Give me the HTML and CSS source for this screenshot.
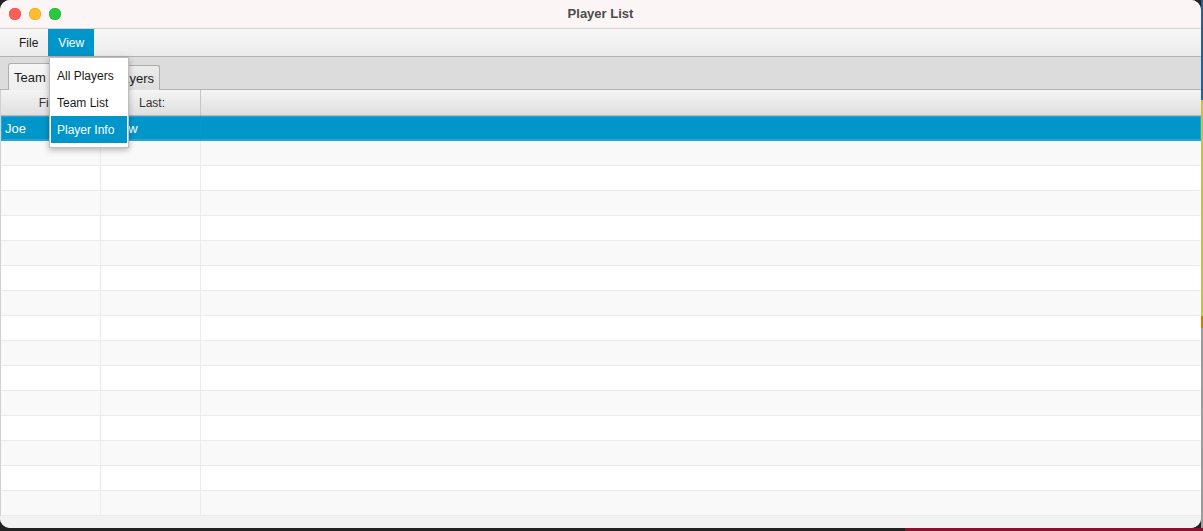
FILE: index.html
```html
<!DOCTYPE html>
<html>
<head>
<meta charset="utf-8">
<title>Player List</title>
<link rel="stylesheet" href="styles.css">
</head>
<body>
<div class="window">
  <div class="titlebar">
    <div class="lights">
      <span class="light red"></span>
      <span class="light yellow"></span>
      <span class="light green"></span>
    </div>
    <div class="title">Player List</div>
  </div>
  <div class="menubar">
    <div class="menu-item">File</div>
    <div class="menu-item active">View</div>
  </div>
  <div class="tabbar">
    <div class="tab tab-first selected">Team List</div>
    <div class="tab">All Players</div>
  </div>
  <div class="table">
    <div class="thead">
      <div class="th c1">First:</div>
      <div class="th c2">Last:</div>
      <div class="th c3"></div>
    </div>
    <div class="tbody">
      <div class="tr selected"><div class="td c1">Joe</div><div class="td c2">Snow</div><div class="td c3"></div></div>
      <div class="tr odd"><div class="td c1"></div><div class="td c2"></div><div class="td c3"></div></div>
      <div class="tr"><div class="td c1"></div><div class="td c2"></div><div class="td c3"></div></div>
      <div class="tr odd"><div class="td c1"></div><div class="td c2"></div><div class="td c3"></div></div>
      <div class="tr"><div class="td c1"></div><div class="td c2"></div><div class="td c3"></div></div>
      <div class="tr odd"><div class="td c1"></div><div class="td c2"></div><div class="td c3"></div></div>
      <div class="tr"><div class="td c1"></div><div class="td c2"></div><div class="td c3"></div></div>
      <div class="tr odd"><div class="td c1"></div><div class="td c2"></div><div class="td c3"></div></div>
      <div class="tr"><div class="td c1"></div><div class="td c2"></div><div class="td c3"></div></div>
      <div class="tr odd"><div class="td c1"></div><div class="td c2"></div><div class="td c3"></div></div>
      <div class="tr"><div class="td c1"></div><div class="td c2"></div><div class="td c3"></div></div>
      <div class="tr odd"><div class="td c1"></div><div class="td c2"></div><div class="td c3"></div></div>
      <div class="tr"><div class="td c1"></div><div class="td c2"></div><div class="td c3"></div></div>
      <div class="tr odd"><div class="td c1"></div><div class="td c2"></div><div class="td c3"></div></div>
      <div class="tr"><div class="td c1"></div><div class="td c2"></div><div class="td c3"></div></div>
      <div class="tr odd"><div class="td c1"></div><div class="td c2"></div><div class="td c3"></div></div>
    </div>
  </div>
  <div class="filler"></div>

  <div class="dropdown">
    <div class="dd-item">All Players</div>
    <div class="dd-item">Team List</div>
    <div class="dd-item hover">Player Info</div>
  </div>
</div>
</body>
</html>
```

FILE: styles.css
```css
* { box-sizing: border-box; }

html, body { margin: 0; padding: 0; }

body {
  width: 1203px;
  height: 531px;
  overflow: hidden;
  font-family: "Liberation Sans", Arial, sans-serif;
  background:
    linear-gradient(#8a1030, #8a1030) right bottom / 298px 3px no-repeat,
    linear-gradient(to bottom, #2a5d9a 0, #2a5d9a 100px, #c9c04a 100px, #c9c04a 316px, #c98200 316px, #c98200 328px, #9c9c9c 328px) right top / 2px 100% no-repeat,
    #222222;
}

.window {
  position: relative;
  width: 1201px;
  height: 528px;
  border-radius: 10px;
  overflow: hidden;
  background: #f2f2f2;
  display: flex;
  flex-direction: column;
}

/* Title bar */
.titlebar {
  position: relative;
  height: 29px;
  flex: none;
  background: #fbf5f5;
  border-bottom: 1px solid #d6d2d2;
  display: flex;
  align-items: center;
  justify-content: center;
}

.lights {
  position: absolute;
  left: 9px;
  top: 8px;
  display: flex;
  gap: 8px;
}

.light {
  width: 12px;
  height: 12px;
  border-radius: 50%;
  display: block;
}
.red { background: #fe5f57; box-shadow: inset 0 0 0 0.5px #e2463f; }
.yellow { background: #febc2e; box-shadow: inset 0 0 0 0.5px #e1a116; }
.green { background: #28c840; box-shadow: inset 0 0 0 0.5px #1aab29; }

.title {
  font-size: 13px;
  font-weight: bold;
  color: #4b4b4b;
  margin-top: -1px;
}

/* Menu bar */
.menubar {
  height: 28px;
  flex: none;
  background: linear-gradient(#f7f7f7, #ebebeb);
  border-bottom: 1px solid #b3b3b3;
  display: flex;
  padding-left: 9px;
}

.menu-item {
  height: 27px;
  padding: 0 10px;
  font-size: 12px;
  color: #1a1a1a;
  display: flex;
  align-items: center;
}

.menu-item.active {
  background: #0096c9;
  color: #fff;
}

/* Tabs */
.tabbar {
  height: 33px;
  flex: none;
  background: #dcdcdc;
  border-bottom: 1px solid #b4b4b4;
  display: flex;
  align-items: flex-end;
  padding-left: 8px;
  gap: 2px;
}

.tab {
  height: 25px;
  margin-bottom: -1px;
  padding: 0 5px;
  font-size: 13px;
  color: #1a1a1a;
  background: linear-gradient(#ececec, #dedede);
  border: 1px solid #aeaeae;
  border-bottom: none;
  border-radius: 3px 3px 0 0;
  display: flex;
  align-items: center;
}

.tab-first { padding-right: 14px; }

.tab.selected {
  height: 27px;
  background: linear-gradient(#f6f6f6, #eeeeee);
}

/* Table */
.table {
  flex: none;
  border-left: 1px solid #d0d0d0;
}

.thead {
  height: 26px;
  display: flex;
  background: linear-gradient(#f4f4f4, #dfdfdf);
  border-bottom: 1px solid #b6b6b6;
}

.th {
  height: 25px;
  font-size: 12px;
  color: #333;
  display: flex;
  align-items: center;
  justify-content: center;
  padding-left: 3px;
  border-right: 1px solid #c6c6c6;
}

.c1 { width: 100px; flex: none; }
.c2 { width: 100px; flex: none; }
.c3 { flex: 1; border-right: none; }

.tr {
  height: 25px;
  display: flex;
  background: #ffffff;
  border-bottom: 1px solid #ebebeb;
}

.tr.odd { background: #f9f9f9; }

.td {
  height: 24px;
  font-size: 13px;
  color: #222;
  display: flex;
  align-items: center;
  padding-left: 4px;
  border-right: 1px solid #ebebeb;
}

.td.c3 { border-right: none; }

.tr.selected {
  background: #0096c9;
  border-bottom-color: #2aa4d2;
  box-shadow: inset 0 0 0 1px #2aa4d2;
}

.tr.selected .td {
  color: #fff;
  border-right-color: #0b98c9;
}

.filler {
  flex: 1;
  background: #f2f2f2;
}

/* Dropdown menu */
.dropdown {
  position: absolute;
  left: 49px;
  top: 57px;
  width: 80px;
  padding: 4px 1px;
  background: #ffffff;
  border: 1px solid #bdbdbd;
  box-shadow: 0 2px 6px rgba(0, 0, 0, 0.28);
}

.dd-item {
  height: 27px;
  padding-left: 6px;
  font-size: 12px;
  color: #1a1a1a;
  display: flex;
  align-items: center;
  white-space: nowrap;
}

.dd-item.hover {
  background: #0096c9;
  color: #fff;
}
```
